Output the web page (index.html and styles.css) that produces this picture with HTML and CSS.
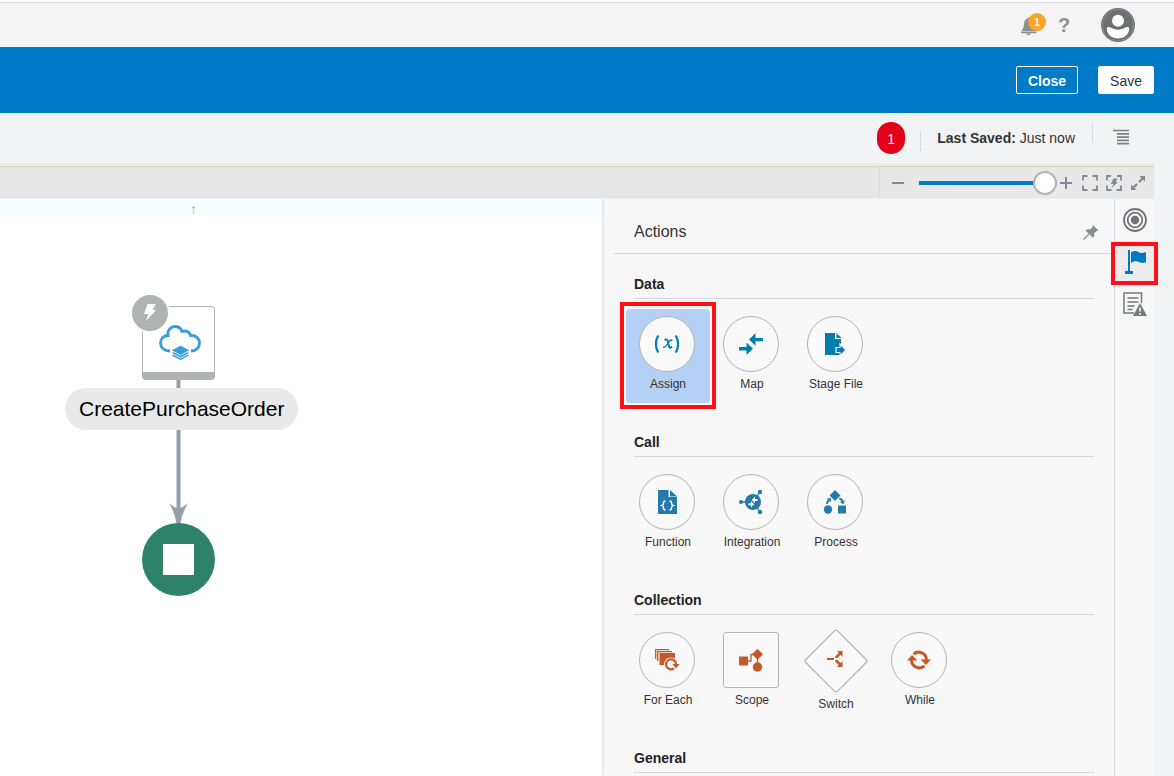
FILE: index.html
```html
<!DOCTYPE html>
<html lang="en">
<head>
<meta charset="utf-8">
<title>CreatePurchaseOrder</title>
<link rel="stylesheet" href="styles.css">
</head>
<body>
<header class="topbar">
  <button class="icon-btn bell" aria-label="Notifications">
    <svg width="26" height="24" viewBox="0 0 26 24" fill="#8c9196"><path d="M1.500 18Q4 15 4 11 4 6 8.500 5V4h1v1Q14 6 14 11q0 4 2.500 7z"/><rect x="1" y="18.500" width="15.500" height="1.700"/><path d="M6 20.500h5q-.5 1.800-2.500 1.800T6 20.500z"/></svg>
    <span class="bell-count">1</span>
  </button>
  <button class="icon-btn help" aria-label="Help">?</button>
  <button class="icon-btn avatar" aria-label="User">
    <svg width="34" height="34" viewBox="0 0 34 34"><circle cx="17" cy="17" r="17" fill="#6e7073"/><circle cx="17" cy="17" r="15.800" fill="none" stroke="#9a9c9e" stroke-width=".6"/><circle cx="17" cy="12.800" r="6" fill="#fff"/><path d="M5.800 21C5.800 18.500 8 18.500 10.500 20q6.500 3.500 13 0c2.500-1.500 4.700-1.500 4.700 1C28 26.500 23 30.500 17 30.500S6 26.500 5.800 21z" fill="#fff"/></svg>
  </button>
</header>

<div class="titlebar">
  <button class="btn btn-outline">Close</button>
  <button class="btn btn-solid">Save</button>
</div>

<div class="statusbar">
  <span class="error-count">1</span>
  <span class="divider divider-low"></span>
  <span class="saved"><b>Last Saved:</b> Just now</span>
  <span class="divider divider-high"></span>
  <button class="icon-btn" aria-label="Menu">
    <svg width="17" height="20" viewBox="0 0 17 20"><path d="M0 3h16M4 6.300h12M4 9.600h12M4 12.900h12M4 16.200h12" transform="translate(0 -.5)" stroke="#7c8187" stroke-width="1.700"/></svg>
  </button>
</div>

<div class="workspace">
  <div class="toolbar">
    <div class="zoom-tools">
      <button class="icon-btn" aria-label="Zoom out"><svg width="12" height="12" viewBox="0 0 12 12"><path d="M0 6h12" stroke="#84898e" stroke-width="2"/></svg></button>
      <input class="zoom-range" type="range" min="0" max="100" value="100" aria-label="Zoom">
      <button class="icon-btn zoom-in" aria-label="Zoom in"><svg width="12" height="12" viewBox="0 0 12 12"><path d="M0 6h12M6 0v12" stroke="#84898e" stroke-width="2"/></svg></button>
      <button class="icon-btn" aria-label="Fit"><svg width="16" height="16" viewBox="0 0 16 16"><path d="M1 5.500V1h4.500M10.500 1H15v4.500M15 10.500V15h-4.500M5.500 15H1v-4.500" fill="none" stroke="#84898e" stroke-width="1.800"/></svg></button>
      <button class="icon-btn" aria-label="Fit trigger"><svg width="16" height="16" viewBox="0 0 16 16"><path d="M1 5.500V1h4M11 1h4v4.500M15 10.500V15h-4.500M5.500 15H1v-4.500" fill="none" stroke="#84898e" stroke-width="1.800"/><path d="M7.500 3.500h4L9.800 7H12l-6.800 6.500L7.500 9H4.800z" fill="#84898e"/></svg></button>
      <button class="icon-btn" aria-label="Expand"><svg width="16" height="16" viewBox="0 0 16 16"><path d="M9.500 1H15v5.500zM6.500 15H1V9.500z" fill="#84898e"/><path d="M13.500 2.500L9 7M7 9l-4.500 4.500" stroke="#84898e" stroke-width="2.200"/></svg></button>
    </div>
  </div>

  <div class="stage">
    <main class="canvas">
      <div class="ruler"><span class="ruler-arrow">↑</span></div>
      <svg class="link" width="20" height="146" viewBox="0 0 20 146"><path d="M10.500 0v130" stroke="#93a0ac" stroke-width="4"/><path d="M1 123q5 4.500 9.500 5.500 4.500-1 9.500-5.500-6 10-7.500 20.500h-4Q7 133 1 123z" fill="#93a0ac"/></svg>
      <div class="node-trigger">
        <svg width="42" height="36" viewBox="0 0 42 36"><g fill="none" stroke="#3a9bdc" stroke-width="2.800"><path d="M11 26C5 26 1.500 22.500 1.500 18S5 10.500 9 10.500C8 5 12 1.500 16 1.500c3.500 0 6 2 7 5 4-1.500 8 .5 8.500 4 5-.5 9 3 9 7.500S37 26 32 26"/></g><g fill="#3a9bdc" stroke="#fff" stroke-width=".8"><path d="M12 30.500l9.500-4.500 9.500 4.500-9.500 5z"/><path d="M12 28l9.500-4.500L31 28l-9.500 5z"/><path d="M12 25.300l9.500-5 9.500 5-9.500 5z"/></g></svg>
      </div>
      <div class="node-bolt">
        <svg width="16" height="20" viewBox="0 0 16 20"><path d="M5.500 1H14l-3.500 6H14L3.500 18.500 6.500 11H2z" fill="#fff"/></svg>
      </div>
      <div class="node-label">CreatePurchaseOrder</div>
      <div class="node-end"><span class="stop"></span></div>
    </main>

    <aside class="panel">
      <div class="panel-head">
        <h2>Actions</h2>
        <button class="icon-btn" aria-label="Unpin"><svg width="16" height="16" viewBox="0 0 16 16"><path d="M9.500.5l6 6-1.800.3-2.700 2.700.2 3-1.400 1.300L2.500 6.500l1.500-1.300 3.200.4 2.600-2.800z" fill="#8a8d90"/><path d="M6 10l-5.500 5.500" stroke="#8a8d90" stroke-width="1.300"/></svg></button>
      </div>

      <section class="group">
        <h3>Data</h3>
        <div class="tiles">
          <button class="tile tile-selected"><span class="shape">
            <svg width="28" height="26" viewBox="0 0 28 26" fill="none" stroke="#047cae"><path d="M5.200 4.500Q.6 13 5.200 21.500" stroke-width="2.200"/><path d="M22.800 4.500q4.600 8.500 0 17" stroke-width="2.200"/><path d="M11.500 8.800c2-.8 2.800 0 3.200 1.500l1.400 5.500c.4 1.400 1.400 1.400 2.900-.3" stroke-width="1.900"/><path d="M19.500 9.300c-2.500-1.300-3.500 1-4.700 3.200s-2.300 4.700-4.800 3.500" stroke-width="1.300"/></svg></span>
            <span>Assign</span></button>
          <button class="tile"><span class="shape">
            <svg width="26" height="24" viewBox="0 0 26 24" fill="#047cae"><path d="M1 15h7.500v-4.500L15 16.800 8.500 23v-4.500H1zM25 6h-7.500V1L11 7.500l6.500 6.300V9.300H25z"/></svg></span>
            <span>Map</span></button>
          <button class="tile"><span class="shape">
            <svg width="24" height="26" viewBox="0 0 24 26"><path d="M2 2h10v6h6v16H2z" fill="#047cae"/><path d="M13.500 2l5 5h-5z" fill="#047cae"/><path d="M13 16.500h4V13l6 6-6 6v-3.500h-4z" fill="#047cae" stroke="#f7f7f7" stroke-width="1.200"/></svg></span>
            <span>Stage File</span></button>
        </div>
      </section>

      <section class="group">
        <h3>Call</h3>
        <div class="tiles">
          <button class="tile"><span class="shape">
            <svg width="20" height="26" viewBox="0 0 20 26"><path d="M1 1h10.500v7H20v17H1z" fill="#247aa9"/><path d="M13 1l7 6.500h-7z" fill="#247aa9"/><path d="M8.500 12Q6.500 12 6.500 14T5 16.500Q6.500 17 6.500 19t2 2M12.500 12q2 0 2 2t1.500 2.500Q14.500 17 14.500 19t-2 2" fill="none" stroke="#fff" stroke-width="1.500"/></svg></span>
            <span>Function</span></button>
          <button class="tile"><span class="shape">
            <svg width="26" height="26" viewBox="0 0 26 26"><path d="M3 13h8M15 13l7-10M15 13l7 10" fill="none" stroke="#247aa9" stroke-width="1.300"/><g fill="#247aa9"><circle cx="15" cy="13" r="8"/><circle cx="3" cy="13" r="2"/><circle cx="22" cy="3" r="2.200"/><circle cx="22" cy="23" r="2.200"/></g><path d="M10.500 15.200h3.500M19.500 11H16" stroke="#fff" stroke-width="2"/><path d="M13 12l3.200 3.200L13 18.500zM17 7.500L13.800 11l3.200 3z" fill="#fff"/></svg></span>
            <span>Integration</span></button>
          <button class="tile"><span class="shape">
            <svg width="24" height="26" viewBox="0 0 24 26" fill="#247aa9"><path d="M12 1l5.500 5.500L12 12 6.500 6.500z"/><circle cx="5" cy="20.500" r="4.200"/><rect x="15" y="16.500" width="8" height="8"/><path d="M3 15q0-3 2-4.500L3.500 9.500l4.500-.5-.3 4.500-1.200-1.500Q5 13.500 5 15zM16.500 8.500q3 .5 4 3.500l1.500-.7-1.500 4-3.700-2 1.600-.6q-.5-1.500-2.500-2.700z"/></svg></span>
            <span>Process</span></button>
        </div>
      </section>

      <section class="group">
        <h3>Collection</h3>
        <div class="tiles">
          <button class="tile"><span class="shape">
            <svg width="26" height="24" viewBox="0 0 26 24"><path d="M1.700 11V1.700H15M3.700 13V3.700H18" fill="none" stroke="#c3592b" stroke-width="1.300"/><path d="M5.500 5H21v12H5.500z" fill="#c3592b"/><circle cx="17" cy="16.500" r="7" fill="#f7f7f7"/><path d="M20 20.300A5 5 0 1 1 22 16" fill="none" stroke="#c3592b" stroke-width="2.200"/><path d="M18.500 16H25.500L22 20.500z" fill="#c3592b"/></svg></span>
            <span>For Each</span></button>
          <button class="tile"><span class="shape shape-square">
            <svg width="26" height="24" viewBox="0 0 26 24" fill="#c3592b"><rect x="1" y="8.500" width="9" height="9"/><path d="M9 13h4V6.500h5M19.500 9v8" fill="none" stroke="#c3592b" stroke-width="1.300"/><path d="M19.500.7L25 6.200l-5.500 5.500L14 6.200z"/><circle cx="19.500" cy="19" r="4.700"/></svg></span>
            <span>Scope</span></button>
          <button class="tile"><span class="shape-diamond">
            <svg width="64" height="64" viewBox="0 0 64 64"><path d="M30.500 1.800q1.500-1.500 3 0l28.700 28.700q1.500 1.500 0 3L33.500 62.200q-1.500 1.500-3 0L1.800 33.500q-1.500-1.500 0-3z" fill="#f9f9f9" stroke="#b3b3b3" stroke-width="1.200"/><g fill="#c3592b"><rect x="23" y="29" width="7" height="2"/><path d="M33 22h5.500v6zM33 38h5.500v-6z"/><path d="M36.500 24L32.500 28v1M36.500 36L32.500 32v-1" fill="none" stroke="#c3592b" stroke-width="2.600"/></g></svg></span>
            <span>Switch</span></button>
          <button class="tile"><span class="shape">
            <svg width="26" height="22" viewBox="0 0 26 22"><path d="M7.500 5.200A7.800 7.800 0 0 1 20.500 11M18.500 16.800A7.800 7.800 0 0 1 5.500 11" fill="none" stroke="#c3592b" stroke-width="3"/><path d="M14.500 10.500H25L20 16zM11.500 11.500H1L6 6z" fill="#c3592b"/></svg></span>
            <span>While</span></button>
        </div>
      </section>

      <section class="group">
        <h3>General</h3>
      </section>
    </aside>

    <nav class="rail">
      <button class="rail-btn" aria-label="Triggers"><svg width="24" height="24" viewBox="0 0 24 24" fill="none" stroke="#6f7478"><circle cx="12" cy="12" r="11" stroke-width="1.800"/><circle cx="12" cy="12" r="7.300" stroke-width="1.800"/><circle cx="12" cy="12" r="4.200" fill="#6f7478" stroke="none"/></svg></button>
      <button class="rail-btn rail-active" aria-label="Actions"><svg width="22" height="26" viewBox="0 0 22 26" fill="#007ac6"><rect x="4" y="1" width="2" height="21"/><rect x="1" y="22" width="8" height="3"/><path d="M7 3.500c4-3 7-1 8.500 0s4 .5 6.500-.5V13c-3 1.500-5 1-7 0s-5-1.500-8 1z"/></svg></button>
      <button class="rail-btn" aria-label="Errors"><svg width="24" height="26" viewBox="0 0 24 26"><path d="M18.500 12V2H1v20h10M4.500 7h11M4.500 11h11M4.500 15h7M4.500 18.500h5" fill="none" stroke="#75797d" stroke-width="1.500"/><path d="M17 12l7 13H10z" fill="#75797d"/><path d="M17 16.500v4M17 22v1.700" stroke="#fff" stroke-width="1.500"/></svg></button>
    </nav>
  </div>
</div>
</body>
</html>
```

FILE: styles.css
```css
* { box-sizing: border-box; }

body {
  margin: 0;
  height: 100vh;
  display: flex;
  flex-direction: column;
  overflow: hidden;
  background: #f2f3f5;
  color: #333;
  font: 14px/20px "Liberation Sans", Arial, sans-serif;
}

button {
  font: inherit;
  color: inherit;
  cursor: pointer;
}

svg { display: block; }

.icon-btn {
  padding: 0;
  border: 0;
  background: none;
}

.topbar {
  flex: none;
  height: 47px;
  padding: 0 39px 0 0;
  border-top: 2px solid #fafafa;
  box-shadow: inset 0 1px #dedede;
  background: #f4f4f4;
  display: flex;
  justify-content: flex-end;
  align-items: center;
}

.bell { position: relative; }

.bell-count {
  position: absolute;
  top: 0;
  right: 0;
  width: 18px;
  height: 18px;
  border-radius: 9px;
  background: #f8a623;
  color: #fff;
  font: bold 10px/20px "Liberation Sans", Arial, sans-serif;
}

.help {
  width: 12px;
  margin: 0 31px 0 12px;
  color: #8c9196;
  font: bold 20px/24px "Liberation Sans", Arial, sans-serif;
}

.titlebar {
  flex: none;
  height: 66px;
  padding-right: 20px;
  background: #007bc8;
  display: flex;
  justify-content: flex-end;
  align-items: center;
  gap: 20px;
}

.btn {
  height: 28px;
  padding: 0 11px;
  border: 1px solid #fff;
  border-radius: 2px;
  line-height: 28px;
}

.btn-outline {
  background: transparent;
  color: #fff;
  font-weight: bold;
}

.btn-solid { background: #fff; }

.statusbar {
  flex: none;
  height: 50px;
  padding-right: 44px;
  display: flex;
  justify-content: flex-end;
  align-items: center;
}

.error-count {
  width: 28px;
  height: 32px;
  margin-right: 15px;
  border-radius: 14px;
  background: #e50019;
  color: #fff;
  line-height: 34px;
  text-align: center;
}

.divider {
  width: 1px;
  height: 20px;
  background: #d3dce6;
}

.divider-low { margin-top: 6px; }
.divider-high { margin: 0 20px 10px 0; }

.saved { margin: 0 17px 0 16px; }

.workspace {
  flex: 1;
  min-height: 0;
  margin-right: 20px;
  border-top: 3px solid #ebecec;
  display: flex;
  flex-direction: column;
}

.toolbar {
  flex: none;
  height: 33px;
  border-top: 1px solid #d5d8bd;
  border-bottom: 1px solid #e9eeee;
  background: #e6e6e6;
  display: flex;
  justify-content: flex-end;
}

.zoom-tools {
  padding: 0 8px 0 12px;
  border-left: 1px solid #dbdbdb;
  background: #e8e8e8;
  display: flex;
  align-items: center;
  gap: 8px;
}

.zoom-in { margin-right: 2px; }

.zoom-range {
  appearance: none;
  width: 138px;
  height: 24px;
  margin: 0 -5px 0 7px;
  background: linear-gradient(#007bc8, #007bc8) center / 100% 4px no-repeat;
}

.zoom-range::-webkit-slider-thumb {
  appearance: none;
  width: 24px;
  height: 24px;
  border: 2px solid #b4b4b4;
  border-radius: 50%;
  background: #fff;
}

.stage {
  flex: 1;
  min-height: 0;
  display: flex;
}

.canvas {
  position: relative;
  flex: 1;
  background: #fff;
}

.ruler {
  height: 19px;
  background: #f8ffff;
}

/* Diagram items are placed on the free canvas. */
.ruler-arrow {
  position: absolute;
  top: 0;
  left: 190px;
  color: #9fb4c0;
}

.link { position: absolute; left: 168px; top: 181px; }

.node-trigger {
  position: absolute;
  left: 142px;
  top: 107px;
  width: 73px;
  height: 74px;
  padding: 18px 0 0 3px;
  border: 1px solid #b1b2b4;
  border-bottom-width: 8px;
  border-radius: 4px;
  background: #fff;
  display: flex;
  justify-content: center;
}

.node-bolt {
  position: absolute;
  left: 130px;
  top: 94px;
  width: 40px;
  height: 40px;
  border: 2px solid #fff;
  border-radius: 50%;
  background: #b1b2b4;
  display: grid;
  place-items: center;
}

.node-label {
  position: absolute;
  left: 65px;
  top: 189px;
  padding: 0 14px;
  border-radius: 21px;
  background: #e9e9e9;
  color: #000;
  font-size: 21px;
  line-height: 42px;
}

.node-end {
  position: absolute;
  left: 142px;
  top: 324px;
  width: 73px;
  height: 73px;
  border-radius: 50%;
  background: #2f826a;
  display: grid;
  place-items: center;
}

.stop {
  width: 31px;
  height: 31px;
  background: #fff;
}

.panel {
  width: 510px;
  overflow: hidden;
  padding-left: 10px;
  background: #f7f7f7;
  box-shadow: 0 0 4px #bbb;
  clip-path: inset(0 0 0 -6px);
}

.panel-head {
  height: 55px;
  padding: 12px 15px 0 20px;
  border-bottom: 1px solid #d5d6d6;
  display: flex;
  justify-content: space-between;
  align-items: center;
}

h2, h3 { margin: 0; }

h2 {
  font-size: 16px;
  font-weight: normal;
}

.group { padding: 20px 20px 9px; }

h3 {
  padding-bottom: 4px;
  border-bottom: 1px solid #d5d6d6;
  color: #222;
  font-size: 14px;
  line-height: 20px;
}

.tiles {
  height: 94px;
  margin: 10px 0 0 -8px;
  display: flex;
}

.tile {
  position: relative;
  width: 84px;
  height: 94px;
  padding: 7px 0 0;
  border: 0;
  border-radius: 4px;
  background: none;
  font-size: 12px;
  display: flex;
  flex-direction: column;
  align-items: center;
  gap: 2px;
}

.tile-selected { background: #b4d0f5; }

.tile-selected::after,
.rail-active::after {
  content: "";
  position: absolute;
  border: 4px solid #ff1018;
}

.tile-selected::after { inset: -7px -6px -6px; }

.shape {
  width: 56px;
  height: 56px;
  margin-right: 2px;
  border: 1px solid #b3b3b3;
  border-radius: 50%;
  background: #f9f9f9;
  display: grid;
  place-items: center;
}

.shape-square { border-radius: 3px; }

.shape-diamond { margin: -3px 0 -5px; }

.shape-diamond + span { padding-top: 4px; }

.rail {
  position: relative;
  z-index: 1;
  width: 40px;
  border-left: 1px solid #d3dce6;
  background: #f7f7f7;
}

.rail-btn {
  position: relative;
  width: 100%;
  height: 42px;
  padding: 0;
  border: 0;
  background: none;
  display: grid;
  place-items: center;
}

.rail-active { background: #ececec; }

.rail-active::after { inset: 1px -4px -2px; }
```
